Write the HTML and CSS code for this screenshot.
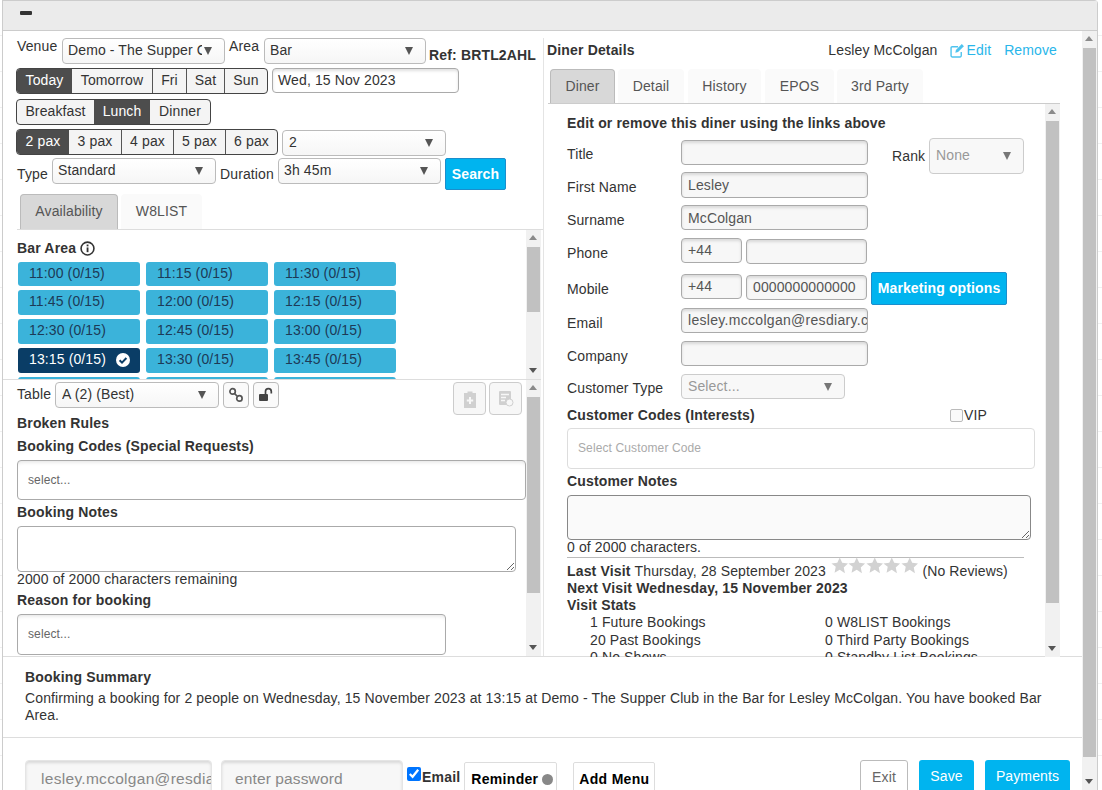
FILE: index.html
```html
<!DOCTYPE html>
<html lang="en">
<head>
<meta charset="utf-8">
<title>Booking</title>
<link rel="stylesheet" href="styles.css">
</head>
<body>
<svg class="defs" width="0" height="0" aria-hidden="true">
  <symbol id="star" viewBox="0 0 20 20"><path d="M10 .5l2.9 6.3 6.9.8-5.1 4.7 1.4 6.8L10 15l-6.1 3.4 1.4-6.8L.2 7.6l6.9-.8z"/></symbol>
</svg>
<div class="modal">
  <div class="modal-head"><span class="minus"></span></div>
  <div class="modal-body">
    <div class="main">
      <div class="columns">
        <section class="left">
          <div class="top-form">
            <div class="row r1">
              <label class="lbl l-venue">Venue</label>
              <div class="select s-venue"><span>Demo - The Supper Club</span></div>
              <label class="lbl l-area">Area</label>
              <div class="select s-area"><span>Bar</span></div>
              <b class="ref">Ref: BRTL2AHL</b>
            </div>
            <div class="row r2">
              <div class="btn-group">
                <a class="on w-today">Today</a><a class="w-tom">Tomorrow</a><a class="w-fri">Fri</a><a class="w-sat">Sat</a><a class="w-sun">Sun</a>
              </div>
              <div class="input date">Wed, 15 Nov 2023</div>
            </div>
            <div class="row r3">
              <div class="btn-group">
                <a class="w-bf">Breakfast</a><a class="on w-lunch">Lunch</a><a class="w-din">Dinner</a>
              </div>
            </div>
            <div class="row r4">
              <div class="btn-group">
                <a class="on w-pax">2 pax</a><a class="w-pax">3 pax</a><a class="w-pax">4 pax</a><a class="w-pax">5 pax</a><a class="w-pax">6 pax</a>
              </div>
              <div class="select s-pax"><span>2</span></div>
            </div>
            <div class="row r5">
              <label class="lbl l-type">Type</label>
              <div class="select s-type"><span>Standard</span></div>
              <label class="lbl l-dur">Duration</label>
              <div class="select s-dur"><span>3h 45m</span></div>
              <a class="search">Search</a>
            </div>
            <div class="tabs tabs-left">
              <a class="tab on t-avail">Availability</a><a class="tab t-w8">W8LIST</a>
            </div>
          </div>

          <div class="pane slots-pane">
            <div class="slots-inner">
              <div class="area-title"><b>Bar Area</b>
                <svg class="info" width="15" height="15" viewBox="0 0 14 14"><circle cx="7" cy="7" r="6" fill="none" stroke="#333" stroke-width="1.5"/><rect x="6.2" y="6" width="1.7" height="4.4" fill="#333"/><rect x="6.2" y="3.3" width="1.7" height="1.7" fill="#333"/></svg>
              </div>
              <div class="slots">
                <a>11:00 (0/15)</a><a>11:15 (0/15)</a><a>11:30 (0/15)</a>
                <a>11:45 (0/15)</a><a>12:00 (0/15)</a><a>12:15 (0/15)</a>
                <a>12:30 (0/15)</a><a>12:45 (0/15)</a><a>13:00 (0/15)</a>
                <a class="sel">13:15 (0/15)<svg width="14" height="14" viewBox="0 0 14 14"><circle cx="7" cy="7" r="7" fill="#fff"/><path d="M3.6 7.2l2.4 2.4 4.4-4.6" fill="none" stroke="#0a3d66" stroke-width="2"/></svg></a><a>13:30 (0/15)</a><a>13:45 (0/15)</a>
                <a class="stub"></a><a class="stub"></a><a class="stub"></a>
              </div>
            </div>
            <div class="sb sb-slots"><i class="up"></i><i class="thumb"></i><i class="down"></i></div>
          </div>

          <div class="pane booking-pane">
            <div class="booking-inner">
              <div class="row table-row">
                <label class="lbl l-table">Table</label>
                <div class="select s-table"><span>A (2) (Best)</span></div>
                <a class="icon-btn">
                  <svg width="16" height="16" viewBox="0 0 16 16" fill="none" stroke="#555" stroke-width="1.7"><circle cx="4.6" cy="4.4" r="2.7"/><circle cx="11.4" cy="11.4" r="2.7"/><path d="M6.5 6.5l3 3"/></svg>
                </a>
                <a class="icon-btn">
                  <svg width="16" height="16" viewBox="0 0 16 16"><rect x="1" y="7" width="9" height="7" rx="1" fill="#444"/><path d="M7.500 7V4.600a2.900 2.900 0 0 1 5.800 0V6.500" fill="none" stroke="#444" stroke-width="1.700"/></svg>
                </a>
                <span class="spring"></span>
                <a class="icon-btn big">
                  <svg width="14" height="18" viewBox="0 0 14 18"><path d="M1 3h3.500V1.500h5V3H13v15H1z" fill="#d0d0d0"/><path d="M7 7v7M3.800 10.500h6.400" stroke="#f7f7f7" stroke-width="2"/></svg>
                </a>
                <a class="icon-btn big">
                  <svg width="16" height="17" viewBox="0 0 16 17"><rect x="1" y="1" width="12" height="14" rx="1" fill="#d0d0d0"/><path d="M3 4.500h8M3 7.500h5M3 10.500h4" stroke="#f7f7f7" stroke-width="1.500"/><circle cx="11.500" cy="12.500" r="3.500" fill="#f7f7f7" stroke="#d0d0d0"/></svg>
                </a>
              </div>
              <h4 class="h-broken">Broken Rules</h4>
              <h4 class="h-codes">Booking Codes (Special Requests)</h4>
              <div class="tagbox b-codes">select...</div>
              <h4 class="h-notes">Booking Notes</h4>
              <textarea class="notes" aria-label="Booking Notes"></textarea>
              <div class="count">2000 of 2000 characters remaining</div>
              <h4 class="h-reason">Reason for booking</h4>
              <div class="tagbox b-reason">select...</div>
            </div>
            <div class="sb sb-booking"><i class="up"></i><i class="thumb"></i><i class="down"></i></div>
          </div>
        </section>

        <section class="right">
          <div class="diner-head">
            <b>Diner Details</b>
            <span class="spring"></span>
            <span class="diner-name">Lesley McColgan</span>
            <a class="link l-edit">
              <svg width="15" height="15" viewBox="0 0 14 14" fill="none" stroke="#4fc3ee" stroke-width="1.300"><path d="M10.500 8.500V12a1 1 0 0 1-1 1H2a1 1 0 0 1-1-1V4.500a1 1 0 0 1 1-1h5.500"/><path d="M5.500 6.500L11 1l2 2-5.500 5.500L5 9z" fill="#4fc3ee" stroke="none"/></svg>Edit</a>
            <a class="link l-remove">Remove</a>
          </div>
          <div class="tabs tabs-right">
            <a class="tab on t-diner">Diner</a><a class="tab t-detail">Detail</a><a class="tab t-history">History</a><a class="tab t-epos">EPOS</a><a class="tab t-3rd">3rd Party</a>
          </div>
          <div class="pane diner-pane">
            <div class="diner-inner">
              <h4 class="h-edit">Edit or remove this diner using the links above</h4>
              <div class="f-row fr-title">
                <label>Title</label><div class="input field"></div>
                <label class="lbl-rank">Rank</label>
                <div class="select s-rank disabled"><span>None</span></div>
              </div>
              <div class="f-row fr-first"><label>First Name</label><div class="input field">Lesley</div></div>
              <div class="f-row fr-sur"><label>Surname</label><div class="input field">McColgan</div></div>
              <div class="f-row fr-phone"><label>Phone</label><div class="input cc">+44</div><div class="input num"></div></div>
              <div class="f-row fr-mobile"><label>Mobile</label><div class="input cc">+44</div><div class="input num">0000000000000</div><a class="marketing">Marketing options</a></div>
              <div class="f-row fr-email"><label>Email</label><div class="input field clip">lesley.mccolgan@resdiary.com</div></div>
              <div class="f-row fr-company"><label>Company</label><div class="input field"></div></div>
              <div class="f-row fr-ctype"><label>Customer Type</label><div class="select s-ctype disabled"><span>Select...</span></div></div>
              <div class="codes-head">
                <h4>Customer Codes (Interests)</h4>
                <span class="vip"><i class="vip-box"></i>VIP</span>
              </div>
              <div class="tagbox b-ccode">Select Customer Code</div>
              <h4 class="h-cnotes">Customer Notes</h4>
              <textarea class="cnotes" aria-label="Customer Notes"></textarea>
              <div class="count c2">0 of 2000 characters.</div>
              <hr class="rule">
              <div class="visit v-last"><b>Last Visit</b><span>Thursday, 28 September 2023</span>
                <span class="stars"><svg><use href="#star"/></svg><svg><use href="#star"/></svg><svg><use href="#star"/></svg><svg><use href="#star"/></svg><svg><use href="#star"/></svg></span>
                <span>(No Reviews)</span></div>
              <div class="visit"><b>Next Visit Wednesday, 15 November 2023</b></div>
              <div class="visit"><b>Visit Stats</b></div>
              <div class="stats">
                <span>1 Future Bookings</span><span>0 W8LIST Bookings</span>
                <span>20 Past Bookings</span><span>0 Third Party Bookings</span>
                <span>0 No Shows</span><span>0 Standby List Bookings</span>
              </div>
            </div>
            <div class="sb sb-diner"><i class="up"></i><i class="thumb"></i><i class="down"></i></div>
          </div>
        </section>
      </div>

      <section class="summary">
        <h4>Booking Summary</h4>
        <p>Confirming a booking for 2 people on Wednesday, 15 November 2023 at 13:15 at Demo - The Supper Club in the Bar for Lesley McColgan. You have booked Bar Area.</p>
      </section>

      <footer class="foot">
        <div class="input f-user">lesley.mccolgan@resdiary.com</div>
        <div class="input f-pass">enter password</div>
        <input class="f-check" type="checkbox" checked aria-label="Email">
        <b class="f-email">Email</b>
        <a class="f-btn f-rem">Reminder<i class="dot"></i></a>
        <a class="f-btn f-menu">Add Menu</a>
        <span class="spring"></span>
        <a class="f-act exit">Exit</a>
        <a class="f-act save">Save</a>
        <a class="f-act pay">Payments</a>
      </footer>
    </div>
    <div class="sb sb-body"><i class="up"></i><i class="thumb"></i><i class="down"></i></div>
  </div>
</div>
</body>
</html>
```

FILE: styles.css
```css
* { box-sizing: border-box; }
html, body { margin: 0; padding: 0; height: 100%; overflow: hidden; }
body { font-family: "Liberation Sans", Arial, sans-serif; font-size: 14px; color: #333; line-height: 17px; letter-spacing: .12px; background: repeating-linear-gradient(#fff 0 35px, #f0f0f0 35px 36px); }
.defs { display: block; height: 0; }
a { display: block; }
b, h4 { font-weight: 700; letter-spacing: .16px; }
h4 { margin: 0; font-size: 14px; line-height: 17px; }
.spring { flex: 1; }

.modal { width: 1096px; height: 790px; margin-left: 2px; background: #fff; border-left: 1px solid #ccc; border-right: 1px solid #ccc; border-radius: 0 4px 0 0; display: flex; flex-direction: column; overflow: hidden; }
.modal-head { height: 31px; flex: none; background: #ebebeb; border-top: 1px solid #ccc; border-bottom: 1px solid #ccc; padding: 10px 0 0 17px; }
.minus { display: block; width: 12px; height: 4px; background: #333; border-radius: 1px; }
.modal-body { flex: 1; min-height: 0; position: relative; overflow: hidden; }
.main { width: 1079px; }

.pane { position: relative; overflow: hidden; }
.sb { position: absolute; top: 0; right: 0; bottom: 0; width: 15px; background: #f1f1f1; display: flex; flex-direction: column; align-items: center; }
.sb i { display: block; flex: none; }
.sb .up { height: 17px; width: 15px; position: relative; }
.sb .up::after { content: ""; position: absolute; left: 3px; top: 5px; border: 4.5px solid transparent; border-bottom: 5px solid #8a8a8a; border-top: 0; }
.sb .down { margin-top: auto; width: 15px; position: relative; height: 18px; }
.sb .down::after { content: ""; position: absolute; left: 3px; bottom: 6px; border: 4.5px solid transparent; border-top: 5px solid #555; border-bottom: 0; }
.sb .thumb { width: 13px; background: #c1c1c1; }
.sb-slots .thumb { height: 65px; }
.sb-slots .down { height: 12px; }
.sb-booking .thumb { height: 196px; }
.sb-diner .thumb { height: 482px; }
.sb-body .thumb { height: 709px; }

.columns { display: flex; height: 625px; }
.left { width: 540px; flex: none; display: flex; flex-direction: column; }
.right { flex: 1; min-width: 0; margin-top: 7px; border-left: 1px solid #e4e4e4; }

.row { display: flex; align-items: flex-start; }
.lbl { display: block; }
.top-form { padding-left: 13px; height: 199px; flex: none; }

.select { height: 26px; border: 1px solid #bbb; border-radius: 4px; background: linear-gradient(#fff, #f6f6f6); position: relative; padding: 0 22px 0 6px; overflow: hidden; line-height: 23px; color: #333; flex: none; }
.select span { display: block; overflow: hidden; white-space: nowrap; }
.select::after { content: ""; position: absolute; right: 12px; top: 8px; border: 4.5px solid transparent; border-top: 8px solid #555; border-bottom: 0; }
.select.disabled { color: #999; background: #f8f8f8; border-color: #ccc; }
.select.disabled::after { border-top-color: #777; }

.input { height: 25px; border: 1px solid #aaa; border-radius: 4px; background: #f7f7f7; box-shadow: inset 0 2px 3px rgba(0,0,0,.12); padding: 0 6px; line-height: 23px; color: #555; flex: none; }

.r1 { padding-top: 7px; height: 37px; }
.l-venue { width: 46px; padding: 0 0 0 1px; }
.s-venue { width: 163px; padding-left: 5px; }
.l-area { width: 39px; padding: 0 0 0 4px; }
.s-area { width: 162px; padding-left: 5px; }
.ref { margin: 9px 0 0 3px; color: #333; white-space: nowrap; }

.btn-group { display: flex; flex: none; height: 26px; border: 1px solid #444; border-radius: 4px; overflow: hidden; background: #f4f4f4; }
.btn-group a { text-align: center; line-height: 23px; color: #333; border-left: 1px solid #555; }
.btn-group a:first-child { border-left: 0; }
.btn-group a.on { background: #4d4d4d; color: #fff; border-left: 0; }
.btn-group a.on + a { border-left: 0; }

.r2 { height: 31px; }
.w-today { width: 55px; } .w-tom { width: 80px; } .w-fri { width: 34px; } .w-sat { width: 38px; } .w-sun { width: 43px; }
.date { width: 187px; margin-left: 4px; padding-left: 5px; color: #333; background: #fff; }
.r3 { height: 30px; }
.w-bf { width: 77px; } .w-lunch { width: 56px; } .w-din { width: 60px; }
.r4 { height: 29px; }
.r4 .btn-group { width: 262px; }
.w-pax { width: 52px; }
.s-pax { width: 164px; margin: 1px 0 0 4px; }
.r5 { height: 36px; }
.l-type { width: 36px; padding: 8px 0 0 1px; }
.s-type { width: 164px; line-height: 22px; padding-left: 5px; }
.l-dur { width: 62px; padding: 8px 0 0 4px; white-space: nowrap; }
.s-dur { width: 163px; line-height: 22px; padding-left: 5px; }
.search { width: 61px; height: 32px; margin-left: 4px; background: #00b4ef; border: 1px solid #1b8ecc; border-radius: 2px; color: #fff; font-weight: 700; text-align: center; line-height: 30px; }

.tabs { display: flex; }
.tab { height: 35px; text-align: center; line-height: 35px; color: #555; background: #fafafa; margin-right: 3px; border-radius: 4px 4px 0 0; }
.tab.on { background: #d8d8d8; border: 1px solid #bbb; border-bottom: 0; line-height: 33px; }
.tabs-left { margin-left: 1px; padding-left: 3px; height: 36px; border-bottom: 1px solid #ddd; }
.t-avail { width: 98px; } .t-w8 { width: 81px; }

.slots-pane { height: 150px; flex: none; width: 538px; border-bottom: 1px solid #ddd; }
.slots-inner { padding: 10px 0 0 14px; }
.area-title { display: flex; align-items: center; gap: 4px; height: 17px; margin-bottom: 5px; }
.info { flex: none; }
.slots { display: grid; grid-template-columns: repeat(3, 122px); grid-template-rows: 24px repeat(4, 25px); column-gap: 6px; row-gap: 4px; margin-left: 1px; }
.slots a { background: #3bb3da; border-radius: 3px; color: #1d3a57; padding: 3px 10px 0 11px; display: flex; justify-content: space-between; }
.slots a.sel { background: #0a3d66; color: #fff; }
.slots a svg { margin-top: 2px; }

.booking-pane { flex: 1; min-height: 0; width: 538px; }
.booking-inner { padding: 2px 19px 0 14px; }
.table-row { height: 31px; }
.l-table { width: 38px; padding-top: 4px; }
.s-table { width: 164px; }
.icon-btn { width: 26px; height: 26px; margin-left: 4px; border: 1px solid #bbb; border-radius: 4px; background: #fafafa; display: flex; align-items: center; justify-content: center; flex: none; }
.icon-btn.big { width: 33px; height: 33px; background: #f7f7f7; border-color: #ccc; }
.icon-btn.big + .icon-btn.big { margin-left: 3px; }
.h-broken { margin-top: 2px; }
.h-codes { margin-top: 6px; }
.tagbox { border: 1px solid #aaa; border-radius: 4px; box-shadow: inset 0 4px 4px -3px rgba(0,0,0,.12); font-size: 12px; color: #666; padding: 0 10px; background: #fff; }
.b-codes { width: 509px; height: 40px; line-height: 38px; margin-top: 5px; }
.h-notes { margin-top: 4px; }
textarea { display: block; resize: vertical; border: 1px solid #aaa; border-radius: 4px; background: #fff; margin: 0; padding: 4px; font: inherit; }
.notes { width: 499px; height: 46px; margin-top: 5px; }
.count { margin-top: -1px; }
.h-reason { margin-top: 4px; }
.b-reason { width: 429px; height: 41px; line-height: 39px; margin-top: 5px; }

.diner-head { display: flex; align-items: center; height: 31px; padding: 0 25px 7px 3px; }
.diner-name { margin-right: 12px; }
.link { color: #29b6ea; }
.l-edit { display: flex; align-items: center; gap: 2px; margin-right: 13px; }
.tabs-right { margin-left: 6px; height: 34px; }
.t-diner { width: 65px; } .t-detail { width: 66px; margin-right: 4px; } .t-history { width: 73px; margin-right: 4px; } .t-epos { width: 69px; } .t-3rd { width: 86px; }
.diner-pane { width: 512px; height: 554px; margin-left: 4px; border-top: 1px solid #ccc; }
.diner-inner { padding: 11px 0 0 19px; }
.h-edit { height: 17px; }
.f-row { display: flex; align-items: flex-start; }
.f-row label { width: 114px; flex: none; padding-top: 7px; white-space: nowrap; }
.field { width: 187px; overflow: hidden; white-space: nowrap; }
.clip { padding-right: 2px; letter-spacing: .3px; }
.fr-title { margin-top: 8px; height: 32px; }
.fr-title > label { padding-top: 6px; }
.f-row label.lbl-rank { width: 37px; margin-left: 24px; padding-top: 8px; }
.s-rank { width: 95px; height: 36px; margin-top: -2px; line-height: 32px; }
.s-rank::after { top: 13px; }
.fr-first { height: 33px; }
.fr-first .input { height: 26px; line-height: 24px; }
.fr-sur { height: 33px; }
.fr-sur .input { line-height: 24px; }
.fr-phone { height: 36px; }
.fr-mobile { height: 34px; }
.fr-email { height: 33px; }
.fr-company { height: 33px; }
.fr-ctype { height: 33px; }
.fr-ctype label { padding-top: 6px; }
.cc { width: 61px; }
.num { width: 121px; margin: 1px 0 0 4px; padding-right: 2px; }
.marketing { width: 136px; height: 33px; margin: -2px 0 0 4px; background: #00b4ef; border: 1px solid #1b8ecc; border-radius: 2px; color: #fff; font-weight: 700; text-align: center; line-height: 31px; white-space: nowrap; }
.s-ctype { width: 164px; height: 25px; line-height: 22px; }
.codes-head { display: flex; justify-content: space-between; height: 21px; padding-right: 73px; }
.vip { display: flex; align-items: center; height: 17px; }
.vip-box { display: block; width: 13px; height: 13px; border: 1px solid #bbb; border-radius: 2px; background: #fafafa; margin-right: 1px; }
.b-ccode { width: 468px; height: 41px; line-height: 39px; border-color: #ddd; box-shadow: none; color: #aaa; }
.h-cnotes { margin-top: 4px; }
.cnotes { width: 464px; height: 45px; margin-top: 5px; background: #fafafa; border-color: #888; }
.rule { width: 457px; margin: 1px 0 5px; border: 0; border-top: 1px solid #bbb; }
.visit { white-space: nowrap; height: 17px; }
.v-last { display: flex; gap: 4px; }
.stars { display: flex; margin: -6px 0 0 1px; }
.stars svg { width: 17.500px; height: 17px; fill: #d2d2d2; }
.stats { display: grid; grid-template-columns: 235px 1fr; padding-left: 23px; line-height: 17.500px; }

.summary { height: 82px; border-top: 1px solid #ddd; border-bottom: 1px solid #ddd; padding: 12px 22px 0 22px; }
.summary p { margin: 4px 0 0; }
.foot { display: flex; align-items: flex-start; padding: 22px 12px 0 22px; height: 70px; }
.f-user { width: 187px; height: 34px; padding: 6px 0 0 15px; color: #888; overflow: hidden; white-space: nowrap; font-size: 15.500px; letter-spacing: .3px; line-height: 24px; background: #f7f7f7; border-color: #e5e5e5; }
.f-pass { width: 182px; height: 34px; margin-left: 9px; padding: 6px 0 0 13px; color: #888; font-size: 15.500px; line-height: 24px; background: #f7f7f7; border-color: #e5e5e5; }
.f-check { width: 14px; height: 14px; margin: 7px 1px 0 4px; accent-color: #0075ff; }
.f-email { margin-top: 9px; color: #333; letter-spacing: .2px; }
.f-btn { height: 32px; margin-top: 2px; border: 1px solid #ddd; border-radius: 2px; color: #000; font-weight: 700; line-height: 32px; text-align: center; letter-spacing: .3px; }
.f-rem { width: 93px; margin-left: 4px; display: flex; align-items: center; padding: 2px 0 0 6px; }
.dot { display: block; width: 11px; height: 11px; background: #888; border-radius: 50%; margin-left: 4px; }
.f-menu { width: 82px; margin-left: 16px; }
.f-act { height: 34px; border-radius: 3px; text-align: center; line-height: 33px; }
.exit { width: 48px; border: 1px solid #bbb; color: #666; line-height: 33px; }
.save { width: 55px; margin-left: 11px; background: #00b4ef; color: #fff; }
.pay { width: 85px; margin-left: 11px; background: #00b4ef; color: #fff; }
```
